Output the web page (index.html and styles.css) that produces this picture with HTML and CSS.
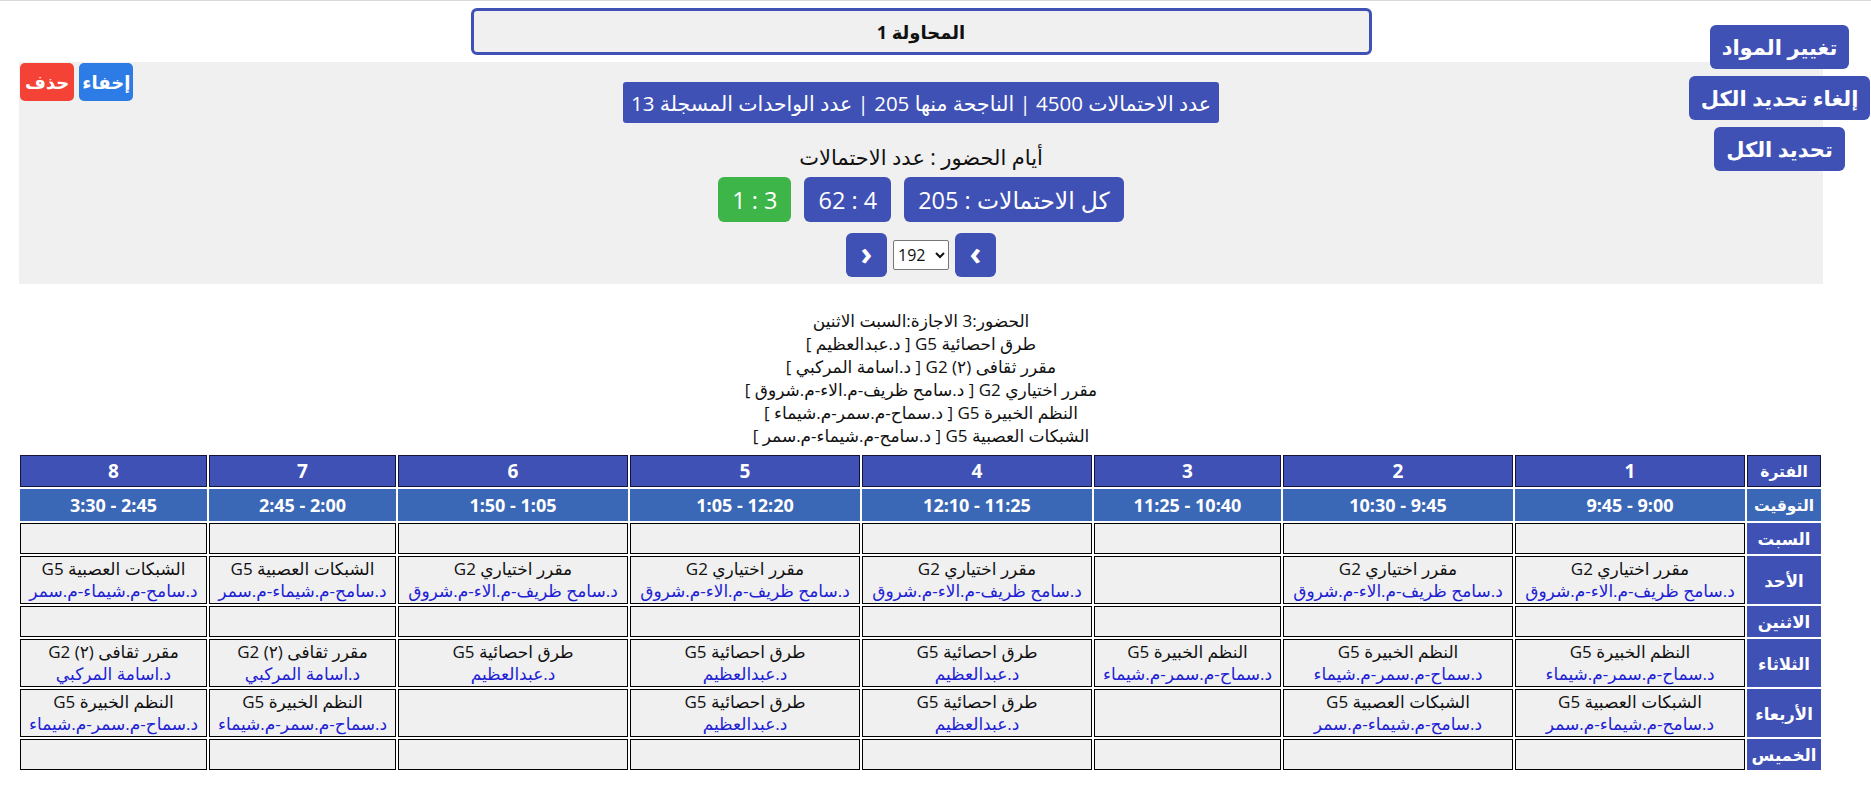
FILE: index.html
```html
<!DOCTYPE html>
<html lang="ar" dir="rtl">
<head>
<meta charset="utf-8">
<title>الجدول</title>
<link rel="stylesheet" href="styles.css">
</head>
<body>
<div class="side-actions">
  <button class="side-btn">تغيير المواد</button>
  <button class="side-btn">إلغاء تحديد الكل</button>
  <button class="side-btn">تحديد الكل</button>
</div>
<main class="wrap">
  <div class="attempt">المحاولة 1</div>
  <section class="panel">
    <div class="panel-tools">
      <button class="tool-btn tool-hide">إخفاء</button>
      <button class="tool-btn tool-del">حذف</button>
    </div>
    <div class="summary">عدد الاحتمالات 4500 | الناجحة منها 205 | عدد الواحدات المسجلة 13</div>
    <div class="days-label">أيام الحضور : عدد الاحتمالات</div>
    <div class="chips">
      <button class="chip">كل الاحتمالات : 205</button>
      <button class="chip">4 : 62</button>
      <button class="chip chip-green">3 : 1</button>
    </div>
    <div class="pager">
      <button class="page-btn">&#8250;</button>
      <select class="page-select"><option>192</option></select>
      <button class="page-btn">&#8249;</button>
    </div>
  </section>
  <div class="info">
    <div>الحضور:3 الاجازة:السبت الاثنين</div>
    <div>طرق احصائية G5 [ د.عبدالعظيم ]</div>
    <div>مقرر ثقافى (٢) G2 [ د.اسامة المركبي ]</div>
    <div>مقرر اختياري G2 [ د.سامح ظريف-م.الاء-م.شروق ]</div>
    <div>النظم الخبيرة G5 [ د.سماح-م.سمر-م.شيماء ]</div>
    <div>الشبكات العصبية G5 [ د.سامح-م.شيماء-م.سمر ]</div>
  </div>
  <table class="schedule">
    <colgroup>
      <col class="c-corner">
      <col class="c-wide"><col class="c-wide"><col class="c-narrow"><col class="c-wide">
      <col class="c-wide"><col class="c-wide"><col class="c-narrow"><col class="c-narrow">
    </colgroup>
    <tr class="r-head">
      <th class="corner">الفترة</th><th>1</th><th>2</th><th>3</th><th>4</th><th>5</th><th>6</th><th>7</th><th>8</th>
    </tr>
    <tr class="r-time">
      <th class="corner">التوقيت</th><th>9:00 - 9:45</th><th>9:45 - 10:30</th><th>10:40 - 11:25</th><th>11:25 - 12:10</th><th>12:20 - 1:05</th><th>1:05 - 1:50</th><th>2:00 - 2:45</th><th>2:45 - 3:30</th>
    </tr>
    <tr class="r-empty">
      <th class="day">السبت</th><td></td><td></td><td></td><td></td><td></td><td></td><td></td><td></td>
    </tr>
    <tr>
      <th class="day">الأحد</th>
      <td><div>مقرر اختياري G2</div><div class="teacher">د.سامح ظريف-م.الاء-م.شروق</div></td>
      <td><div>مقرر اختياري G2</div><div class="teacher">د.سامح ظريف-م.الاء-م.شروق</div></td>
      <td></td>
      <td><div>مقرر اختياري G2</div><div class="teacher">د.سامح ظريف-م.الاء-م.شروق</div></td>
      <td><div>مقرر اختياري G2</div><div class="teacher">د.سامح ظريف-م.الاء-م.شروق</div></td>
      <td><div>مقرر اختياري G2</div><div class="teacher">د.سامح ظريف-م.الاء-م.شروق</div></td>
      <td><div>الشبكات العصبية G5</div><div class="teacher">د.سامح-م.شيماء-م.سمر</div></td>
      <td><div>الشبكات العصبية G5</div><div class="teacher">د.سامح-م.شيماء-م.سمر</div></td>
    </tr>
    <tr class="r-empty">
      <th class="day">الاثنين</th><td></td><td></td><td></td><td></td><td></td><td></td><td></td><td></td>
    </tr>
    <tr>
      <th class="day">الثلاثاء</th>
      <td><div>النظم الخبيرة G5</div><div class="teacher">د.سماح-م.سمر-م.شيماء</div></td>
      <td><div>النظم الخبيرة G5</div><div class="teacher">د.سماح-م.سمر-م.شيماء</div></td>
      <td><div>النظم الخبيرة G5</div><div class="teacher">د.سماح-م.سمر-م.شيماء</div></td>
      <td><div>طرق احصائية G5</div><div class="teacher">د.عبدالعظيم</div></td>
      <td><div>طرق احصائية G5</div><div class="teacher">د.عبدالعظيم</div></td>
      <td><div>طرق احصائية G5</div><div class="teacher">د.عبدالعظيم</div></td>
      <td><div>مقرر ثقافى (٢) G2</div><div class="teacher">د.اسامة المركبي</div></td>
      <td><div>مقرر ثقافى (٢) G2</div><div class="teacher">د.اسامة المركبي</div></td>
    </tr>
    <tr>
      <th class="day">الأربعاء</th>
      <td><div>الشبكات العصبية G5</div><div class="teacher">د.سامح-م.شيماء-م.سمر</div></td>
      <td><div>الشبكات العصبية G5</div><div class="teacher">د.سامح-م.شيماء-م.سمر</div></td>
      <td></td>
      <td><div>طرق احصائية G5</div><div class="teacher">د.عبدالعظيم</div></td>
      <td><div>طرق احصائية G5</div><div class="teacher">د.عبدالعظيم</div></td>
      <td></td>
      <td><div>النظم الخبيرة G5</div><div class="teacher">د.سماح-م.سمر-م.شيماء</div></td>
      <td><div>النظم الخبيرة G5</div><div class="teacher">د.سماح-م.سمر-م.شيماء</div></td>
    </tr>
    <tr class="r-empty">
      <th class="day">الخميس</th><td></td><td></td><td></td><td></td><td></td><td></td><td></td><td></td>
    </tr>
  </table>
  <div class="footer-note">عدد الاحتمالات المعروضة</div>
</main>
</body>
</html>
```

FILE: styles.css
```css
* { box-sizing: border-box; }
html, body { margin: 0; padding: 0; }
body {
  font-family: "Open Sans", "DejaVu Sans", sans-serif;
  color: #111;
  background: #fff;
  border-top: 1px solid #d9d9d9;
  position: relative;
}
button { font-family: inherit; border: none; cursor: pointer; white-space: nowrap; }

.side-actions {
  position: absolute;
  z-index: 5;
  top: 24px;
  left: 1688px;
  width: 183px;
  display: flex;
  flex-direction: column;
  align-items: center;
  gap: 7px;
}
.side-btn {
  height: 44px;
  padding: 0 12px;
  background: #3f51b5;
  color: #fff;
  font-size: 21px;
  font-weight: bold;
  border-radius: 6px;
}

.wrap { margin: 0 48px 0 19px; }

.attempt {
  width: 901px;
  height: 47px;
  margin: 7px auto 0;
  border: 3px solid #3f51b5;
  border-radius: 6px;
  background: #f0f0f0;
  display: flex;
  align-items: center;
  justify-content: center;
  font-size: 18px;
  font-weight: bold;
}

.panel {
  position: relative;
  margin-top: 7px;
  background: #f0f0f0;
  padding: 20px 0 7px;
  display: flex;
  flex-direction: column;
  align-items: center;
}
.panel-tools {
  position: absolute;
  top: 1px;
  left: 1px;
  display: flex;
  gap: 5px;
}
.tool-btn {
  height: 38px;
  color: #fff;
  font-size: 18px;
  font-weight: bold;
  border-radius: 5px;
}
.tool-hide { background: #2d7be4; padding: 0 3px; }
.tool-del { background: #f44336; padding: 0 5px; }

.summary {
  height: 41px;
  padding: 0 8px;
  background: #3f51b5;
  color: #fff;
  font-size: 20.5px;
  border-radius: 3px;
  display: flex;
  align-items: center;
}
.days-label {
  margin-top: 21px;
  font-size: 21px;
  line-height: 26px;
}
.chips { display: flex; gap: 13px; margin-top: 7px; }
.chip {
  height: 45px;
  padding: 0 14px;
  background: #3f51b5;
  color: #fff;
  font-size: 23.5px;
  border-radius: 6px;
}
.chip-green { background: #3db548; }
.pager { display: flex; align-items: center; gap: 6px; margin-top: 11px; }
.page-btn {
  width: 41px;
  height: 44px;
  background: #3f51b5;
  color: #fff;
  font-size: 32px;
  font-weight: bold;
  line-height: 1;
  border-radius: 6px;
  padding: 0 0 4px;
}
.page-select {
  direction: ltr;
  width: 56px;
  height: 30px;
  font-family: "Open Sans", sans-serif;
  font-size: 16px;
  border: 1px solid #767676;
  border-radius: 2px;
  background: #fff;
  color: #111;
}

.info {
  margin-top: 25px;
  text-align: center;
  font-size: 17px;
  line-height: 23px;
}

.schedule {
  width: 100%;
  margin-top: 6px;
  table-layout: fixed;
  border-spacing: 2px;
}
.c-corner { width: 74px; }
.c-wide { width: 230px; }
.c-narrow { width: 187px; }

.schedule th {
  color: #fff;
  font-weight: bold;
  text-align: center;
  padding: 0 4px;
  white-space: nowrap;
}
.r-head th {
  height: 32px;
  background: #3f51b5;
  border: 1px solid #14143a;
  font-size: 19px;
}
.r-time th {
  height: 32px;
  background: #3a67b6;
  border: 1px solid #3a67b6;
  font-size: 18px;
}
.schedule th.corner { font-size: 15.5px; padding: 0; }
.schedule th.day {
  background: #3f51b5;
  border: 1px solid #3f51b5;
  font-size: 16.5px;
  padding: 0;
}
.schedule td {
  height: 48px;
  padding: 1px 4px;
  background: #f0f0f0;
  border: 1px solid #000;
  text-align: center;
  font-size: 17px;
  line-height: 22px;
}
.schedule .r-empty td, .schedule .r-empty th { height: 31px; }
.teacher { color: #2121d4; }

.footer-note {
  margin-top: 28px;
  padding-right: 205px;
  text-align: right;
  color: #999;
  font-size: 18px;
}
```
